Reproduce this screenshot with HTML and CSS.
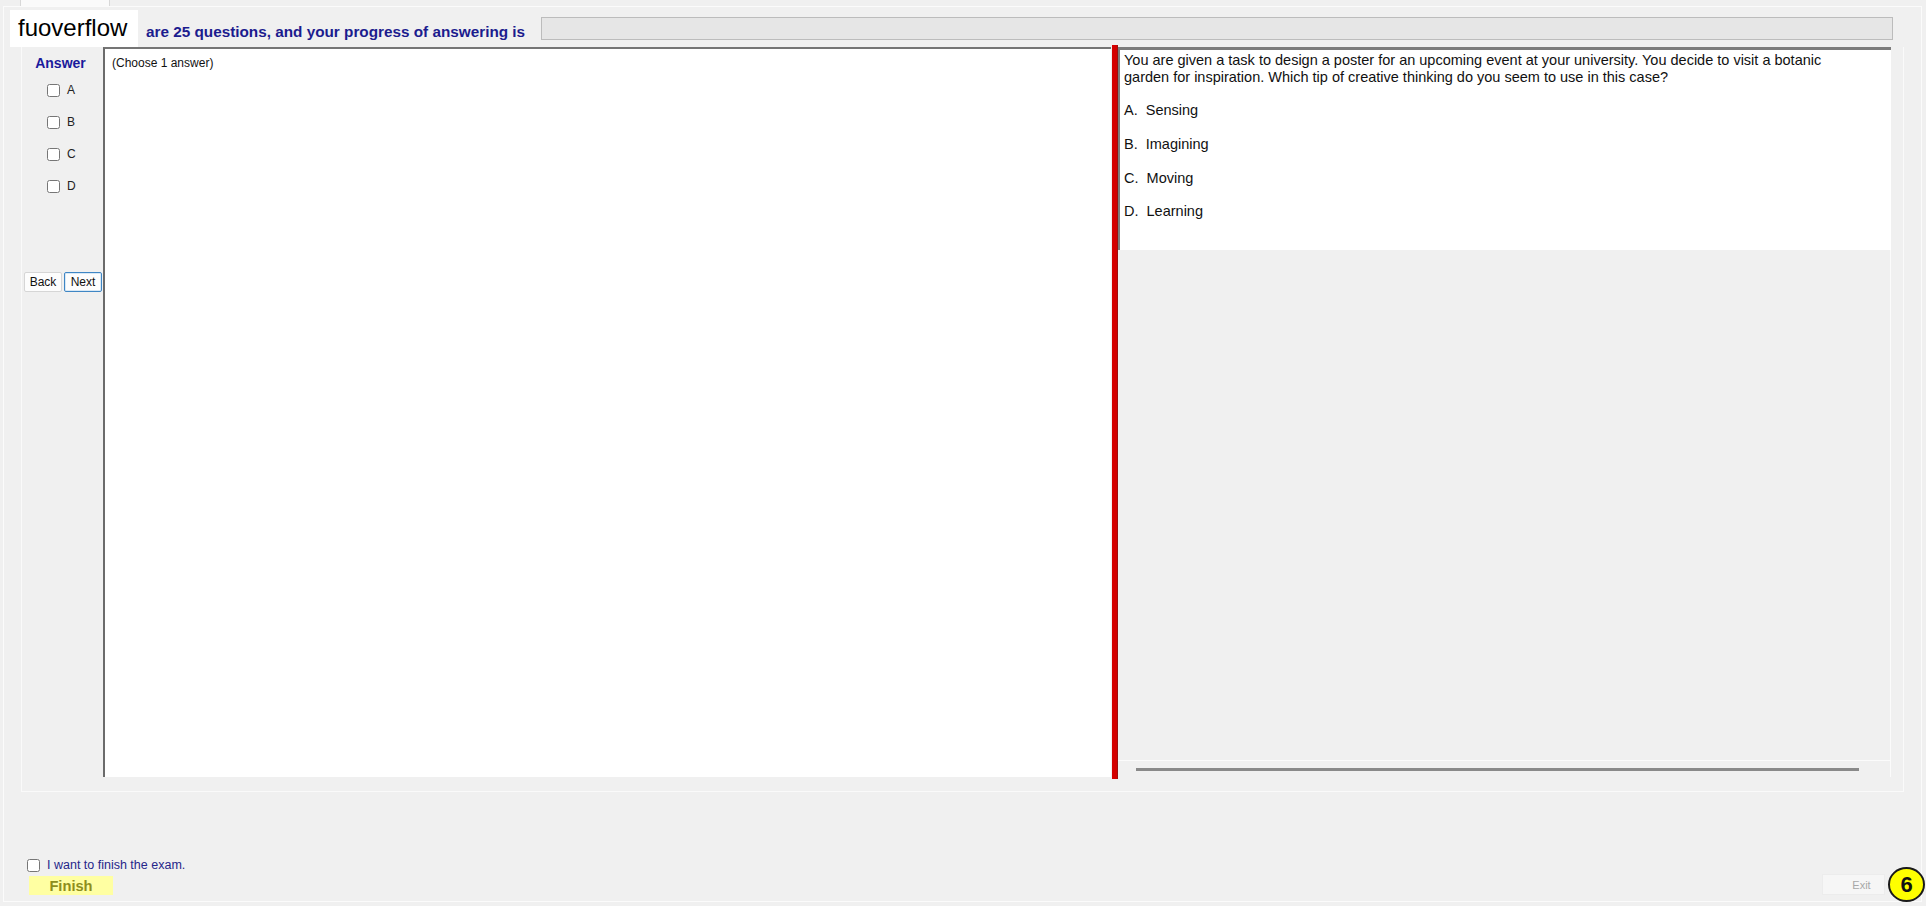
FILE: index.html
```html
<!DOCTYPE html>
<html>
<head>
  <meta charset="utf-8">
  <title>Exam</title>
  <link rel="stylesheet" href="styles.css">
</head>
<body>
<div class="window">
  <div class="tabs">
    <div class="tab"></div>
  </div>

  <div class="tabpage">
    <div class="header">
      <span class="progress-text">are 25 questions, and your progress of answering is</span>
      <div class="progress"></div>
    </div>

    <div class="panel">
      <div class="answers">
        <div class="answers-title">Answer</div>
        <div class="opts">
          <label class="opt"><input type="checkbox"> <span>A</span></label>
          <label class="opt"><input type="checkbox"> <span>B</span></label>
          <label class="opt"><input type="checkbox"> <span>C</span></label>
          <label class="opt"><input type="checkbox"> <span>D</span></label>
        </div>
        <div class="nav">
          <button class="btn">Back</button>
          <button class="btn btn-focus">Next</button>
        </div>
      </div>

      <div class="left-pane">
        <p class="hint">(Choose 1 answer)</p>
      </div>

      <div class="splitter"></div>

      <div class="right-pane">
        <div class="question">You are given a task to design a poster for an upcoming event at your university. You decide to visit a botanic
garden for inspiration. Which tip of creative thinking do you seem to use in this case?

A.  Sensing

B.  Imagining

C.  Moving

D.  Learning</div>
        <div class="question-rest">
          <div class="hscroll"><div class="thumb"></div></div>
        </div>
      </div>
    </div>

    <div class="footer">
      <div class="finish-box">
        <label class="confirm"><input type="checkbox"> <span>I want to finish the exam.</span></label>
        <button class="finish">Finish</button>
      </div>
      <button class="exit">Exit</button>
    </div>
  </div>

  <!-- watermark over the header label -->
  <div class="brand">fuoverflow</div>
  <div class="badge">6</div>
</div>
</body>
</html>
```

FILE: styles.css
```css
body {
  margin: 0;
  background: #f0f0f0;
  font-family: "Liberation Sans", Arial, sans-serif;
  color: #111;
}
.window {
  position: relative;
  width: 1926px;
  height: 906px;
  overflow: hidden;
}

/* tab header, cut at the top edge */
.tabs {
  height: 6px;
  padding-left: 20px;
  display: flex;
}
.tab {
  width: 88px;
  background: #fafafa;
  border-left: 1px solid #d8d8d8;
  border-right: 1px solid #d8d8d8;
}
.tabpage {
  margin: 0 4px 0 3px;
  height: 896px;
  box-sizing: border-box;
  border: 1px solid #fbfbfb;
  display: flex;
  flex-direction: column;
}

/* progress label + bar */
.header {
  display: flex;
  align-items: center;
  height: 37px;
  margin-top: 3px;
}
.progress-text {
  padding-left: 142px;
  padding-top: 7px;
  font-size: 15.3px;
  font-weight: bold;
  color: #1c1c8e;
  white-space: nowrap;
}
.progress {
  flex: 1;
  height: 23px;
  box-sizing: border-box;
  margin-left: 16px;
  margin-right: 28px;
  background: #e6e6e6;
  border: 1px solid #bcbcbc;
}

/* main group */
.panel {
  display: flex;
  height: 745px;
  box-sizing: border-box;
  margin: 0 17px;
  padding: 0 11px 14px 0;
  border: 1px solid #fafafa;
  border-top: 0;
}
.answers {
  width: 81px;
  flex-shrink: 0;
}
.answers-title {
  padding-top: 8px;
  padding-right: 4px;
  line-height: 16px;
  text-align: center;
  font-size: 14px;
  font-weight: bold;
  color: #1a1a9c;
}
.opts {
  margin-top: 3px;
}
.opt {
  display: flex;
  align-items: center;
  height: 32px;
  padding-left: 25px;
  font-size: 12px;
  color: #222;
}
.opt input,
.confirm input {
  width: 13px;
  height: 13px;
  margin: 0 7px 0 0;
}
.nav {
  display: flex;
  gap: 2px;
  margin-top: 70px;
  padding-left: 2px;
}
.btn {
  width: 38px;
  height: 20px;
  padding: 0;
  font-family: "Liberation Sans", Arial, sans-serif;
  font-size: 12px;
  color: #111;
  background: #fdfdfd;
  border: 1px solid #d6d6d6;
  border-radius: 2px;
}
.btn-focus {
  border-color: #3f86c4;
  box-shadow: inset 0 0 0 1px #d8e8f5;
}

.left-pane {
  width: 1008px;
  flex-shrink: 0;
  box-sizing: border-box;
  background: #fff;
  border-left: 2px solid #6b6b6b;
  border-top: 2px solid #757575;
}
.hint {
  margin: 0;
  padding: 7px 0 0 7px;
  font-size: 12px;
  line-height: 14px;
}

.splitter {
  width: 6px;
  flex-shrink: 0;
  margin: -2px 0 -2px 1px;
  background: #d40000;
  border-right: 1px solid #9a1010;
  box-sizing: border-box;
}

.right-pane {
  width: 773px;
  flex-shrink: 0;
  display: flex;
  flex-direction: column;
}
.question {
  height: 203px;
  box-sizing: border-box;
  background: #fff;
  border-top: 3px solid #7c7c7c;
  border-left: 2px solid #7c7c7c;
  padding: 2px 0 0 4px;
  font-size: 14.5px;
  line-height: 16.8px;
  white-space: pre-wrap;
}
.question-rest {
  flex: 1;
  display: flex;
  flex-direction: column;
  justify-content: flex-end;
  border-right: 1px solid #fbfbfb;
}
.hscroll {
  height: 16px;
  border-top: 1px solid #fbfbfb;
  display: flex;
  align-items: center;
  padding-left: 18px;
}
.thumb {
  width: 723px;
  height: 3px;
  background: #898989;
}

/* bottom bar */
.footer {
  flex: 1;
  display: flex;
  justify-content: space-between;
  align-items: flex-end;
  padding: 0 36px 6px 23px;
}
.confirm {
  display: flex;
  align-items: center;
  height: 16px;
  font-size: 12.5px;
  color: #26268a;
}
.finish {
  display: block;
  width: 84px;
  height: 19px;
  margin: 3px 0 0 2px;
  padding: 0;
  border: 0;
  background: #ffffa2;
  font-family: "Liberation Sans", Arial, sans-serif;
  font-size: 14.67px;
  font-weight: bold;
  color: #8e8e1c;
}
.exit {
  width: 63px;
  height: 21px;
  margin-bottom: 0;
  padding: 0 0 0 16px;
  background: #f6f6f6;
  border: 1px solid #ececec;
  font-family: "Liberation Sans", Arial, sans-serif;
  font-size: 11px;
  color: #a8a8a8;
}

.brand {
  position: absolute;
  left: 10px;
  top: 10px;
  width: 128px;
  height: 37px;
  box-sizing: border-box;
  padding: 4px 0 0 8px;
  background: #fff;
  font-size: 24px;
  color: #000;
}
.badge {
  position: absolute;
  right: 1px;
  bottom: 4px;
  width: 37px;
  height: 35px;
  box-sizing: border-box;
  border: 2px solid #1a1a1a;
  border-radius: 50%;
  background: #ffff00;
  display: flex;
  justify-content: center;
  align-items: center;
  font-size: 22px;
  font-weight: bold;
  color: #111;
}
```
